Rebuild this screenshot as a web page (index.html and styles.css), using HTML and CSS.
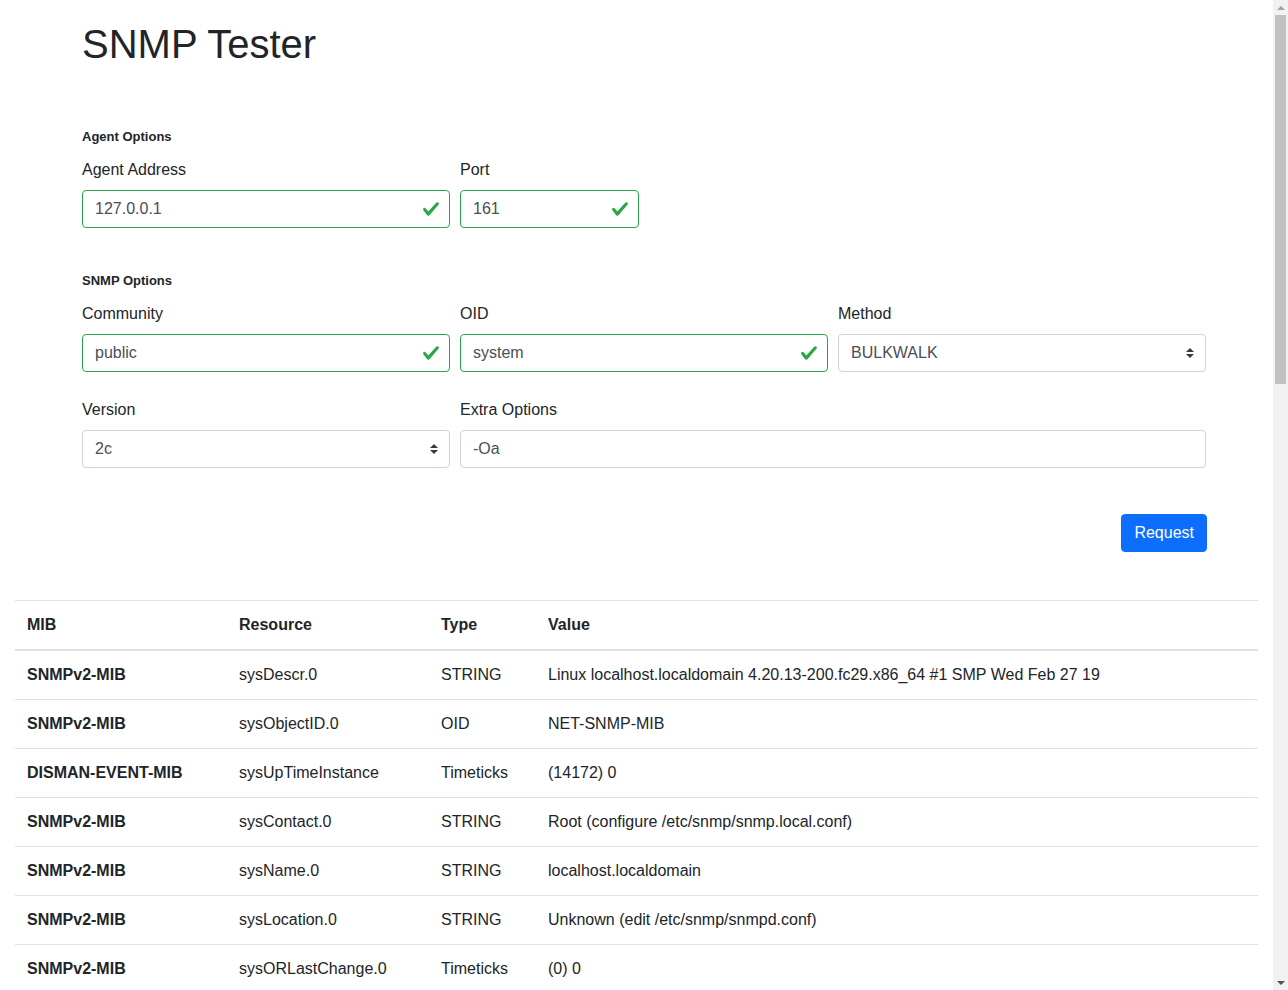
FILE: index.html
```html
<!DOCTYPE html>
<html lang="en">
<head>
<meta charset="utf-8">
<title>SNMP Tester</title>
<link rel="stylesheet" href="styles.css">
</head>
<body>
<div class="page">
  <div class="container">
    <h1 class="title">SNMP Tester</h1>

    <section class="section section-agent">
      <h6 class="legend">Agent Options</h6>
      <div class="grid">
        <div class="field span-2">
          <label class="label">Agent Address</label>
          <div class="control">
            <input class="input valid" type="text" value="127.0.0.1">
            <svg class="check" viewBox="0 0 8 8"><path fill="#28a745" d="M2.3 6.73L.6 4.53c-.4-1.04.46-1.4 1.1-.8l1.1 1.4 3.4-3.8c.6-.63 1.6-.27 1.2.7l-4 4.6c-.43.5-.8.4-1.1.1z"/></svg>
          </div>
        </div>
        <div class="field span-1">
          <label class="label">Port</label>
          <div class="control">
            <input class="input valid" type="text" value="161">
            <svg class="check" viewBox="0 0 8 8"><path fill="#28a745" d="M2.3 6.73L.6 4.53c-.4-1.04.46-1.4 1.1-.8l1.1 1.4 3.4-3.8c.6-.63 1.6-.27 1.2.7l-4 4.6c-.43.5-.8.4-1.1.1z"/></svg>
          </div>
        </div>
      </div>
    </section>

    <section class="section section-snmp">
      <h6 class="legend">SNMP Options</h6>
      <div class="grid">
        <div class="field span-2">
          <label class="label">Community</label>
          <div class="control">
            <input class="input valid" type="text" value="public">
            <svg class="check" viewBox="0 0 8 8"><path fill="#28a745" d="M2.3 6.73L.6 4.53c-.4-1.04.46-1.4 1.1-.8l1.1 1.4 3.4-3.8c.6-.63 1.6-.27 1.2.7l-4 4.6c-.43.5-.8.4-1.1.1z"/></svg>
          </div>
        </div>
        <div class="field span-2">
          <label class="label">OID</label>
          <div class="control">
            <input class="input valid" type="text" value="system">
            <svg class="check" viewBox="0 0 8 8"><path fill="#28a745" d="M2.3 6.73L.6 4.53c-.4-1.04.46-1.4 1.1-.8l1.1 1.4 3.4-3.8c.6-.63 1.6-.27 1.2.7l-4 4.6c-.43.5-.8.4-1.1.1z"/></svg>
          </div>
        </div>
        <div class="field span-2">
          <label class="label">Method</label>
          <div class="control">
            <select class="input select">
              <option>BULKWALK</option>
              <option>GET</option>
              <option>WALK</option>
            </select>
            <svg class="arrows" viewBox="0 0 4 5"><path fill="#343a40" d="M2 0L0 2h4zm0 5L0 3h4z"/></svg>
          </div>
        </div>
        <div class="field span-2">
          <label class="label">Version</label>
          <div class="control">
            <select class="input select">
              <option>2c</option>
              <option>1</option>
              <option>3</option>
            </select>
            <svg class="arrows" viewBox="0 0 4 5"><path fill="#343a40" d="M2 0L0 2h4zm0 5L0 3h4z"/></svg>
          </div>
        </div>
        <div class="field span-4">
          <label class="label">Extra Options</label>
          <div class="control">
            <input class="input" type="text" value="-Oa">
          </div>
        </div>
      </div>
    </section>

    <div class="actions">
      <button class="btn" type="button">Request</button>
    </div>
  </div>

  <div class="results">
    <table class="table">
      <colgroup>
        <col class="c-mib"><col class="c-res"><col class="c-type"><col class="c-val">
      </colgroup>
      <thead>
        <tr><th>MIB</th><th>Resource</th><th>Type</th><th>Value</th></tr>
      </thead>
      <tbody>
        <tr><th>SNMPv2-MIB</th><td>sysDescr.0</td><td>STRING</td><td>Linux localhost.localdomain 4.20.13-200.fc29.x86_64 #1 SMP Wed Feb 27 19</td></tr>
        <tr><th>SNMPv2-MIB</th><td>sysObjectID.0</td><td>OID</td><td>NET-SNMP-MIB</td></tr>
        <tr><th>DISMAN-EVENT-MIB</th><td>sysUpTimeInstance</td><td>Timeticks</td><td>(14172) 0</td></tr>
        <tr><th>SNMPv2-MIB</th><td>sysContact.0</td><td>STRING</td><td>Root (configure /etc/snmp/snmp.local.conf)</td></tr>
        <tr><th>SNMPv2-MIB</th><td>sysName.0</td><td>STRING</td><td>localhost.localdomain</td></tr>
        <tr><th>SNMPv2-MIB</th><td>sysLocation.0</td><td>STRING</td><td>Unknown (edit /etc/snmp/snmpd.conf)</td></tr>
        <tr><th>SNMPv2-MIB</th><td>sysORLastChange.0</td><td>Timeticks</td><td>(0) 0</td></tr>
      </tbody>
    </table>
  </div>
</div>

<div class="scrollbar" aria-hidden="true">
  <div class="sb-btn">
    <svg class="sb-arrow" viewBox="0 0 8 4"><polygon fill="#a3a3a3" points="0,4 4,0 8,4"/></svg>
  </div>
  <div class="sb-track">
    <div class="sb-thumb"></div>
  </div>
  <div class="sb-btn">
    <svg class="sb-arrow" viewBox="0 0 8 4"><polygon fill="#505050" points="0,0 8,0 4,4"/></svg>
  </div>
</div>
</body>
</html>
```

FILE: styles.css
```css
html, body {
  margin: 0;
  padding: 0;
}

body {
  display: flex;
  height: 990px;
  overflow: hidden;
  font-family: "Liberation Sans", Arial, sans-serif;
  font-size: 16px;
  line-height: 1.5;
  color: #212529;
  background: #fff;
}

.page {
  flex: 1;
  min-width: 0;
  height: 990px;
  overflow: hidden;
}

.container {
  width: 1124px;
  padding-left: 82px;
}

.title {
  margin: 20px 0 0 0;
  font-size: 40px;
  line-height: 48px;
  font-weight: 500;
}

.section {
  display: flex;
  flex-direction: column;
}

.section-agent {
  margin-top: 59px;
}

.section-snmp {
  margin-top: 43px;
}

.legend {
  margin: 0 0 11px 0;
  font-size: 13px;
  line-height: 20px;
  font-weight: 700;
}

.grid {
  display: grid;
  grid-template-columns: repeat(6, 1fr);
  column-gap: 10px;
  row-gap: 26px;
}

.span-1 { grid-column: span 1; }
.span-2 { grid-column: span 2; }
.span-4 { grid-column: span 4; }

.field {
  display: flex;
  flex-direction: column;
}

.label {
  display: block;
  margin-bottom: 8px;
  line-height: 24px;
}

.control {
  position: relative;
}

.input {
  display: block;
  box-sizing: border-box;
  width: 100%;
  height: 38px;
  margin: 0;
  padding: 6px 12px;
  font-family: inherit;
  font-size: 16px;
  line-height: 24px;
  color: #495057;
  background: #fff;
  border: 1px solid #ced4da;
  border-radius: 4px;
  outline: none;
}

.input.valid {
  border-color: #28a745;
  padding-right: 36px;
}

.select {
  appearance: none;
  -webkit-appearance: none;
  padding-right: 28px;
}

.check {
  position: absolute;
  right: 10px;
  top: 10px;
  width: 18px;
  height: 18px;
  pointer-events: none;
}

.arrows {
  position: absolute;
  right: 12px;
  top: 14px;
  width: 8px;
  height: 10px;
  pointer-events: none;
}

.actions {
  display: flex;
  justify-content: flex-end;
  margin-top: 46px;
}

.btn {
  box-sizing: border-box;
  height: 38px;
  padding: 6px 12px;
  font-family: inherit;
  font-size: 16px;
  line-height: 24px;
  color: #fff;
  background: #0d6efd;
  border: 1px solid #0d6efd;
  border-radius: 4px;
  margin-right: -1px;
}

.results {
  padding: 0 15px;
  margin-top: 48px;
}

.table {
  width: 100%;
  border-collapse: collapse;
  table-layout: fixed;
  color: #212529;
}

.c-mib { width: 212px; }
.c-res { width: 202px; }
.c-type { width: 107px; }

.table th,
.table td {
  padding: 12px;
  text-align: left;
  vertical-align: top;
  border-top: 1px solid #dee2e6;
  line-height: 24px;
  white-space: nowrap;
  overflow: hidden;
}

.table th {
  font-weight: 700;
}

.table thead th {
  border-bottom: 2px solid #dee2e6;
}

.scrollbar {
  flex: 0 0 15px;
  width: 15px;
  height: 990px;
  display: flex;
  flex-direction: column;
  background: #f1f1f1;
}

.sb-btn {
  flex: 0 0 15px;
  height: 15px;
  display: flex;
  align-items: center;
  justify-content: center;
}

.sb-arrow {
  width: 8px;
  height: 4px;
}

.sb-track {
  flex: 1;
  padding: 0 2px;
}

.sb-thumb {
  height: 369px;
  background: #c1c1c1;
}
```
